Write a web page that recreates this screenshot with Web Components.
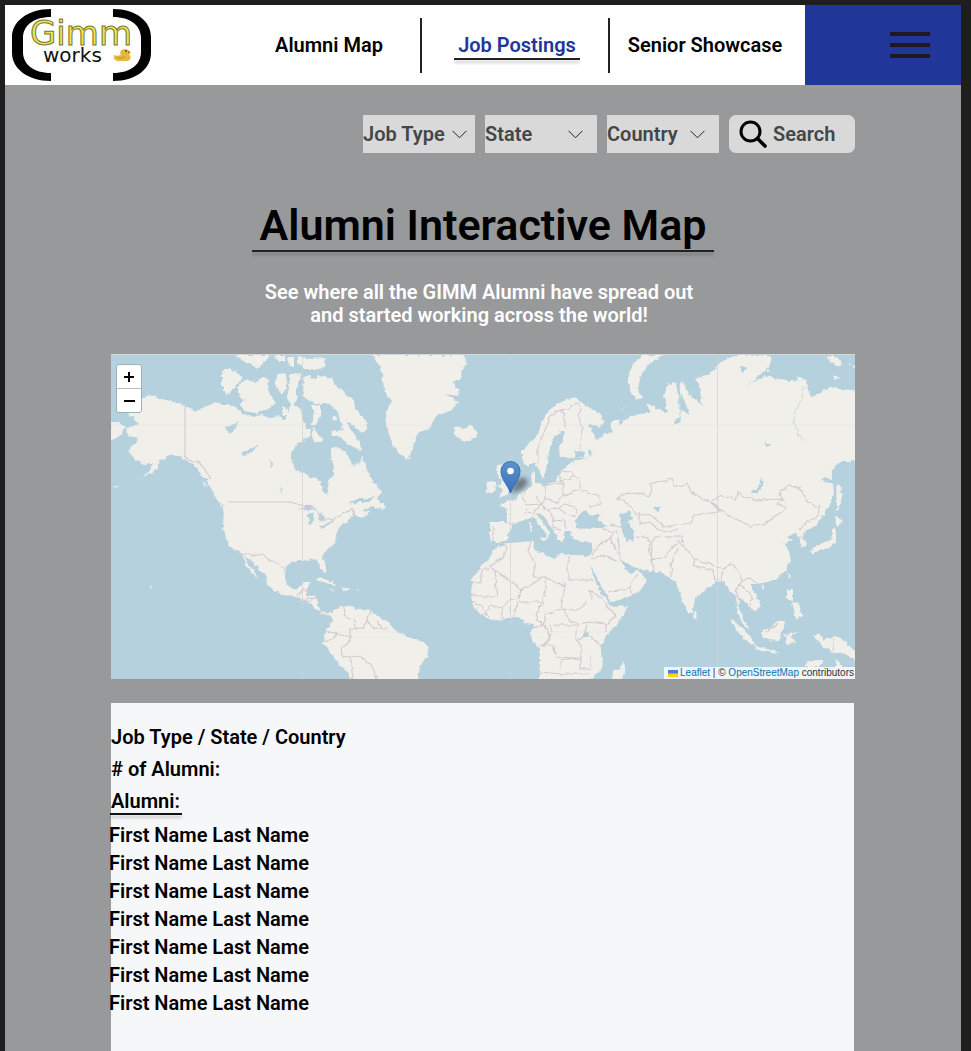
<!DOCTYPE html>
<html lang="en">
<head>
<meta charset="utf-8">
<title>GIMM Works – Alumni Interactive Map</title>
<style>
  html, body { margin: 0; }
  body { background: #1e1e1e; font-family: Roboto, "Liberation Sans", sans-serif; font-weight: 600; font-size: 20px; color: #000; }
</style>
</head>
<body>
<alumni-page></alumni-page>
<script>
function define(name, html) {
  const template = document.createElement('template');
  template.innerHTML = html;
  customElements.define(name, class extends HTMLElement {
    constructor() {
      super();
      this.attachShadow({ mode: 'open' }).append(template.content.cloneNode(true));
    }
  });
}

define('gimm-logo', `
<style>
  :host { display: block; flex: none; width: 140px; height: 72px; }
  svg { display: block; }
  text { font-family: "DejaVu Sans", sans-serif; font-weight: 400; }
</style>
<svg width="140" height="72" viewBox="12 9 140 72" role="img" aria-label="Gimm works">
  <path d="M51 9C27 9 12 22 12 37V53C12 68 27 81 51 81V73C33 73 23 64 23 52V38C23 26 33 17 51 17Z"/>
  <path d="M113 9C137 9 151 22 151 37V53C151 68 137 81 113 81V73C131 73 141 64 141 52V38C141 26 131 17 113 17Z"/>
  <text x="30" y="45" font-size="34" fill="#ece84a" stroke="#77763a" stroke-width="1">Gimm</text>
  <text x="43" y="62" font-size="20" fill="#111">works</text>
  <path d="M114 55c2 1 4 1 7 0c-2-3 0-6 4-6c4 0 6 3 4 6c3 1 2 6-3 6h-8c-3 0-5-3-4-6z" fill="#e3b93c"/>
  <path d="M128 51l3 1l-3 2z" fill="#df6b32"/><circle cx="126" cy="51" r="1" fill="#654b18"/>
  <path d="M117 57q4 3 8-1" fill="none" stroke="#c99522"/>
</svg>`);

define('nav-item', `
<style>
  :host { display: flex; align-items: center; justify-content: center; flex: 1 1 0; height: 55px; box-sizing: border-box; padding-left: 4px; border-right: 2px solid #222; }
  :host(:last-of-type) { border-right-color: transparent; }
  a { position: relative; color: inherit; text-decoration: none; white-space: nowrap; line-height: 26px; padding: 0 4px; }
  :host([active]) a { color: #203698; }
  :host([active]) a::after { content: ""; position: absolute; left: 0; right: 0; top: 100%; height: 2px; background: #222; box-shadow: 0 3px 3px rgba(0,0,0,.2); }
</style>
<a href="#"><slot></slot></a>`);

define('menu-button', `
<style>
  :host { display: flex; flex: 0 0 156px; background: #203698; justify-content: flex-end; align-items: center; box-sizing: border-box; padding-right: 31px; }
  button { border: 0; background: none; padding: 0; display: block; }
  svg { display: block; }
</style>
<button type="button" aria-label="Menu"><svg width="40" height="28" viewBox="0 0 40 28"><path d="M0 3h40M0 14h40M0 25h40" stroke="#1d1b20" stroke-width="4"/></svg></button>`);

define('site-header', `
<style>
  :host { display: block; }
  header { display: flex; height: 80px; background: #fff; }
  gimm-logo { margin: 4px 0 0 7px; }
  nav { display: flex; align-items: center; flex: 0 1 564px; margin-left: auto; padding-right: 7px; }
</style>
<header>
  <gimm-logo></gimm-logo>
  <nav aria-label="Main">
    <nav-item>Alumni Map</nav-item>
    <nav-item active>Job Postings</nav-item>
    <nav-item>Senior Showcase</nav-item>
  </nav>
  <menu-button></menu-button>
</header>`);

const selectTemplate = document.createElement('template');
selectTemplate.innerHTML = `
<style>
  :host { display: block; flex: 0 1 112px; }
  .box { display: grid; align-items: center; height: 38px; background: #d9d9d9; }
  select, svg { grid-area: 1 / 1; }
  select { appearance: none; border: 0; border-radius: 0; background: none; margin: 0; padding: 0; width: 100%; height: 38px; font: inherit; color: #444748; }
  svg { justify-self: end; margin-right: 8px; pointer-events: none; }
  :host([roomy]) svg { margin-right: 14px; }
</style>
<div class="box">
  <select><option></option></select>
  <svg width="15" height="9" viewBox="0 0 15 9"><path d="M.5 .8L7.5 7.8L14.5 .8" fill="none" stroke="#222"/></svg>
</div>`;
customElements.define('filter-select', class extends HTMLElement {
  constructor() {
    super();
    this.attachShadow({ mode: 'open' }).append(selectTemplate.content.cloneNode(true));
  }
  connectedCallback() {
    const name = this.getAttribute('label');
    this.shadowRoot.querySelector('select').setAttribute('aria-label', name);
    this.shadowRoot.querySelector('option').textContent = name;
  }
});

define('search-box', `
<style>
  :host { display: block; flex: 0 1 126px; min-width: 0; }
  label { display: flex; align-items: center; gap: 6px; height: 38px; box-sizing: border-box; padding: 0 8px 0 10px; background: #d9d9d9; border-radius: 7px; }
  svg { flex: none; }
  input { flex: 1; width: 100%; min-width: 0; border: 0; padding: 0; background: none; font: inherit; color: #444748; }
  input::placeholder { color: #444748; opacity: 1; }
</style>
<label><svg width="28" height="28" viewBox="0 0 28 28" fill="none" stroke="#000" stroke-width="3" stroke-linecap="round"><circle cx="11.5" cy="11.5" r="9.5"/><path d="M18.5 18.5L26 26" stroke-width="3.6"/></svg>
<input type="text" placeholder="Search" aria-label="Search"></label>`);

define('filter-bar', `
<style>
  :host { display: block; }
  form { display: flex; justify-content: flex-end; gap: 10px; margin: 0; }
</style>
<form>
  <filter-select label="Job Type"></filter-select>
  <filter-select label="State" roomy></filter-select>
  <filter-select label="Country" roomy></filter-select>
  <search-box></search-box>
</form>`);

define('page-intro', `
<style>
  :host { display: flex; flex-direction: column; align-items: center; text-align: center; }
  h1 { margin: 0; padding: 0 8px; font-size: 43px; line-height: 50px; font-weight: 600; }
  h1::after { content: ""; display: block; height: 2px; margin: 0 -8px; background: #222; box-shadow: 0 3px 3px rgba(0,0,0,.2); }
  p { margin: 29px 8px 0 0; max-width: 440px; line-height: 23px; color: #fff; }
</style>
<h1><slot name="title"></slot></h1>
<p><slot></slot></p>`);

define('world-map', `
<style>
  :host { display: block; position: relative; border-top: 1px solid #d5d9da; }
  .world { display: block; width: 100%; aspect-ratio: 744 / 324; background: #b5d1dd; }
  .land { fill: #f0efea; }
  .water { fill: #b5d1dd; }
  .borders { fill: none; stroke: #d6c8cf; stroke-width: 1.1; stroke-linejoin: round; }
  .rivers { fill: none; stroke: #c9dbe1; stroke-width: 1; }
  .zoom { position: absolute; left: 5px; top: 9px; display: grid; border: 1px solid #9db2bb; border-radius: 3px; overflow: hidden; background: #bbb; gap: 1px; }
  button { border: 0; padding: 0; width: 24px; height: 23px; background: #fff; display: grid; place-items: center; }
  .credit { position: absolute; right: 0; bottom: 0; display: flex; align-items: center; gap: 2px; padding: 0 1px 0 4px; background: rgba(255,255,255,.8); color: #333; font: 10px/12px "Liberation Sans", sans-serif; white-space: nowrap; }
  .credit a { color: #0078a8; text-decoration: none; }
</style>
<svg class="world" viewBox="111 355 744 324" preserveAspectRatio="xMidYMid slice" role="img" aria-label="World map">
  <defs>
    <filter id="coast" x="0" y="0" width="100%" height="100%"><feTurbulence type="fractalNoise" baseFrequency=".22" numOctaves="2" seed="4"/><feDisplacementMap in="SourceGraphic" scale="5" xChannelSelector="R" yChannelSelector="G"/><feGaussianBlur stdDeviation=".6"/></filter>
    <filter id="line"><feTurbulence type="fractalNoise" baseFrequency=".15" numOctaves="2" seed="9"/><feDisplacementMap in="SourceGraphic" scale="5" xChannelSelector="R" yChannelSelector="G"/><feGaussianBlur stdDeviation=".4"/></filter>
    <filter id="soft" x="-50%" y="-50%" width="200%" height="200%"><feGaussianBlur stdDeviation="2"/></filter>
    <linearGradient id="pin" x2="0" y2="1"><stop stop-color="#5b93cc"/><stop offset="1" stop-color="#3a70bf"/></linearGradient>
  </defs>
  <g filter="url(#coast)">
    <path d="M100 340H870V690H100Z" fill="#b5d1dd"/>
    <g class="land">
      <path d="M134 405L142 398L150 395L158 398L170 401L184 405L190 408L196 411L203 408L210 405L216 401L222 405L230 405L238 409L244 415L253 417L262 414L270 418L280 416L285 420L288 413L290 406L296 405L301 410L302 418L306 428L305 438L300 442L293 450L291 460L296 471L303 472L312 478L320 480L322 490L327 494L329 488L328 481L333 475L334 466L331 458L331 448L338 447L346 453L351 463L356 466L360 462L361 456L365 465L369 475L373 482L380 488L382 493L374 497L364 499L356 499L349 505L358 502L368 502L376 496L380 502L387 507L380 509L372 507L362 511L370 512L362 518L354 514L347 521L338 528L336 535L335 544L325 552L322 558L325 567L325 573L321 568L318 560L310 559L303 561L293 561L286 566L285 577L287 585L294 590L301 586L304 582L310 582L307 590L306 596L317 596L317 604L320 612L326 613L331 612L331 616L322 614L315 608L309 602L300 599L293 596L283 595L268 586L267 578L258 567L250 560L245 554L247 563L254 571L257 578L251 573L246 565L240 552L231 547L226 538L223 528L224 505L217 500L212 490L206 480L199 472L193 464L183 458L172 455L165 458L158 463L154 471L145 476L135 482L122 488L141 479L150 470L153 463L143 464L134 459L128 452L132 445L139 439L128 435L125 428L138 425L134 418L128 413Z"/>
      <path d="M222 371L230 369L240 374L243 379L235 386L228 395L222 390ZM238 385L246 380L255 382L264 377L269 380L268 390L272 397L276 403L266 410L255 413L244 411L240 404L245 400L238 393ZM234 355L249 363L257 369L266 360L272 355ZM278 375L286 374L287 382L285 391L281 394L274 384ZM290 374L302 373L299 381L296 390L296 401L292 407L288 398L289 386ZM298 357L310 359L324 358L326 366L319 369L304 369L298 364ZM288 357H294V367H289ZM275 355H284V362H278ZM311 405L321 405L321 415L316 425L312 424L314 415ZM282 407L288 409L288 415L282 415ZM333 415L336 415L337 420L332 421ZM313 428L324 441L316 442L311 437ZM306 429H311L309 437L304 441Z"/>
      <path d="M304 378L310 375L313 379L318 376L333 378L335 384L344 392L354 401L355 408L368 424L364 434L354 426L345 420L360 443L361 451L348 444L338 436L331 435L332 431L343 430L340 420L336 410L329 403L318 404L307 400L303 396Z"/>
      <path d="M371 355L379 364L382 375L384 390L392 401L387 410L386 425L391 440L398 453L408 460L412 450L417 433L430 428L436 416L450 411L459 402L445 394L458 396L460 391L452 382L462 378L460 372L467 364L463 355Z"/>
      <path d="M454 428L459 426L463 429L472 425L478 433L474 439L466 442L460 440L455 434ZM498 466L503 465L504 475L507 484L512 488L509 494L499 498L502 492L499 487L501 480L497 474ZM489 481L496 482L495 491L486 494L487 484ZM119 422L126 427L118 437L111 440V422Z"/>
      <path d="M522 452L528 445L537 436L542 422L547 413L555 405L565 400L575 397L581 402L590 408L600 413L605 422L600 427L588 422L592 433L598 440L606 433L612 432L612 420L618 420L620 425L632 415L650 413L646 403L655 407L667 413L664 395L668 384L676 383L678 395L679 408L680 416L672 425L680 422L681 410L690 415L684 400L679 390L682 381L690 395L702 405L700 390L696 378L710 374L720 362L735 355L771 355L770 366L758 376L748 386L757 380L765 376L780 379L796 382L797 376L805 380L808 390L812 398L820 392L833 387L842 389L860 391V461L842 461L832 470L822 480L833 484L834 493L829 505L822 518L812 528L805 531L803 537L807 546L802 547L799 537L795 533L787 537L793 540L784 543L788 549L791 560L786 570L778 578L767 582L758 584L751 584L751 589L757 597L762 605L755 611L750 607L745 602L740 597L738 605L742 617L749 630L743 625L737 610L736 595L730 592L724 582L718 580L708 588L695 598L693 611L689 614L683 602L678 590L676 582L668 577L660 572L641 570L630 565L620 560L630 574L637 569L647 580L640 591L625 598L611 603L605 592L597 578L589 563L595 580L601 593L611 607L628 606L620 620L608 634L601 645L603 660L602 670L588 681H538L540 665L540 650L532 640L531 632L533 624L525 623L517 617L505 619L491 621L480 613L472 603L471 595L472 580L480 568L488 560L496 547L510 543L533 541L534 549L545 555L555 559L560 552L570 555L590 556L592 550L593 543L585 542L572 538L571 531L565 531L563 541L558 540L553 530L545 518L538 512L540 519L550 532L548 538L545 532L533 517L525 520L518 522L512 526L509 533L506 541L497 543L490 540L490 522L507 522L507 510L500 504L508 501L515 500L520 494L528 489L532 486L531 475L535 470L535 483L545 486L555 482L561 470L573 462L588 457L560 458L559 447L566 432L560 430L553 440L549 452L548 465L543 478L538 470L535 462L528 467L522 458Z"/>
      <path d="M331 613L340 607L348 606L360 610L368 609L375 615L388 622L395 630L408 637L420 640L429 647L427 657L420 665L418 681H350L348 672L335 660L327 648L323 643L325 632L332 623Z"/>
      <path d="M315 580L323 578L332 582L338 585L330 584ZM341 587L351 589L345 591ZM331 589L335 590L331 591ZM356 590H359V591H356ZM530 523L532 523L532 533L530 533ZM539 537L548 537L546 541ZM624 661L626 668L620 685L612 679L613 671L620 668ZM694 609L698 617L694 619ZM730 620L737 623L751 637L755 646L745 640L738 632ZM754 646L768 649L780 653L768 652L757 650ZM761 631L768 630L777 621L784 621L782 631L778 641L768 640L762 636ZM785 635L798 632L790 637L796 643L787 644ZM787 589L792 590L792 601L787 598ZM791 602L799 603L802 616L796 619ZM812 634L820 635L824 640L835 636L845 641L856 653V660L846 654L832 652L822 646ZM808 662L816 660L824 660L820 668L805 667ZM837 658L842 669L835 671ZM788 573L791 576L788 580ZM760 585L766 586L763 590ZM809 551L821 543L831 540L833 528L836 529L836 542L829 548L818 551L812 555ZM835 515L844 521L836 526ZM836 484L840 485L842 501L837 511ZM820 477L832 470L832 479Z"/>
      <path d="M643 355L633 364L628 378L629 389L636 400L642 398L638 388L641 374L650 363L663 355ZM622 407L625 408L623 411ZM827 357L833 354L843 364L836 366ZM833 375L841 378L835 380ZM846 362L856 366V369ZM767 369L771 371L767 372ZM150 585L153 587L150 588Z"/>
      <path d="M113 487l8-2-7 4zM151 466l9-4-3 8zM202 480l6 8-3-1zM213 495l11 12-3-1z"/>
    </g>
    <g class="water">
      <path d="M575 524L580 513L585 511L592 516L602 514L596 519L608 527L590 529L576 528Z"/>
      <path d="M619 515L630 510L633 519L628 522L633 532L634 540L625 541L622 530Z"/>
      <path d="M574 453L584 451L584 456L575 458ZM579 451L583 450L585 455L581 457ZM588 449L592 453L589 457ZM653 507H661L657 512ZM583 634L589 633L588 637L583 637Z"/>
      <path d="M750 493L758 487L763 477L763 485L757 493ZM225 427L238 422L235 430L230 434ZM241 454L258 444L254 451L243 456ZM298 509L310 504L316 509L308 510ZM309 514L314 512L312 526L308 525ZM318 512L323 514L326 520L320 522ZM319 526L328 523L334 519L330 524L321 529Z"/>
      <path d="M740 366l9 2-7 4zM279 485l4 9-2-2zM270 459l4 6-3 2zM764 441l6 4-4 2z"/>
    </g>
    <path class="rivers" d="M803 386L802 399L795 410L794 422L798 434L806 441M687 378L685 385L691 391M680 395V422M579 645L578 637M590 654L591 668M568 504L573 500"/>
  </g>
  <path class="borders" d="M185 406V457M228 502H291"/>
  <g class="borders" filter="url(#line)">
    <path d="M185 457L193 463L198 460L211 479M291 502L304 506L315 508L321 520L335 519L349 510L352 508L354 515M241 553L259 556L264 555L271 562L278 562L285 571M296 598L302 590H307V599L317 598M303 598L308 602L317 596M329 613L322 616"/>
    <path d="M343 607L344 615L354 619L355 629L363 628L367 620L370 610M367 620L373 628L388 628M378 620L381 628M354 629H350V642L341 648L342 656L350 657L353 679M350 657L361 656L373 668L377 679M327 631L337 634L350 637M325 642L332 639L337 634"/>
    <path d="M538 464L538 448L544 432L551 416L558 410L564 414L565 428M558 410L568 409L575 403L580 405L579 417L582 430L580 449M560 471L570 472L578 478L581 489L562 496L564 483L543 485M562 496L556 503L545 498L541 504L525 505L521 494M581 489L600 498L602 504L588 507M545 498V485M541 504L533 514L525 513L527 508M541 504L548 510L560 507L566 514L576 517M548 510L553 520L565 521V530M560 507L565 504L574 507L578 514M553 520V528L562 530M507 523L517 525M493 526V540M560 471V482L574 477M524 495L527 482M534 514L544 517L549 525M541 504L536 498"/>
    <path d="M506 544L505 555L490 566L482 570M490 567L514 584L521 590L544 577M490 570H481V582H472M494 569L497 597H480L472 594M521 590L519 598L509 600L502 608L490 605M530 541L529 552L534 562V577L544 577L565 586V582M568 556V580H594M565 586L561 609L545 615L542 601L546 590V578M517 602L514 618M519 602H541M509 608L511 618M502 608V620M490 605L484 615M472 602L482 606L489 618M541 602L535 620L544 625L546 617M561 609L575 610L583 607L588 600M563 609L570 620L578 624L588 622M544 625L534 628M545 625L550 640L540 645H553L556 656L570 658L581 660L580 668L592 670M553 625H577V640L581 645V658L570 658M541 645L549 642M538 672L563 674H590M592 600L590 590L602 598L607 607L616 615L606 624V632M588 622L606 624M590 636L602 648M560 670L562 660L573 658M587 624L584 636L579 640M549 625L552 634L546 642"/>
    <path d="M592 555L599 545L610 538L618 554M592 558L605 555L618 562M608 592L629 588L637 574M629 588L634 597M610 525L624 528M616 530L619 544L620 560M600 528L614 532L611 538M633 536L648 539L652 545L651 560L655 570M651 560L665 557L678 540L684 546L695 560L712 565L722 569M651 560L649 546L656 536L672 537L682 537L683 542M639 512V524L650 522L657 528L668 532L678 530M639 513L651 515L664 527L675 525L690 523L695 515"/>
    <path d="M637 515L625 500L617 500L621 494L639 493L651 496L650 485L672 479L674 486L680 486L687 483L694 495L711 502L718 506L719 512L695 515M711 501L723 496L735 499L738 492L745 497L756 500L779 499L785 502L779 494L782 490L788 486L799 487L806 500L815 506L820 505M711 503L730 517L752 526L766 523L779 514L786 508L778 504L782 499M820 506L817 518L806 521L799 530M798 537L804 537M695 560L693 565L713 571L715 580L722 579L724 569L732 562L738 570L742 580L750 578L756 584M738 584L745 588L753 598L748 606M742 580L736 590L740 600M672 577L671 565L678 548M767 632L777 623M834 639V654"/>
  </g>
  <g stroke="#d0d4d8" stroke-width="1" opacity=".7"><path d="M302.500 355V679M510.500 355V679M717.500 355V679"/><path d="M111 425H855M111 632H855" opacity=".25"/></g>
  <path d="M511 493L515 482C520 475 530 477 527 484C524 490 516 492 511 493Z" opacity=".4" filter="url(#soft)"/>
  <path d="M510.500 493C508 485 501 480 501 471A9.500 9.500 0 0 1 520 471C520 480 513 485 510.500 493Z" fill="url(#pin)" stroke="#386ea7" stroke-width="1"/>
  <circle cx="510.500" cy="471" r="3.300" fill="#fff"/>
</svg>
<div class="zoom">
  <button type="button" aria-label="Zoom in"><svg width="12" height="12" viewBox="0 0 12 12"><path d="M6 1V11M1 6H11" stroke="#000" stroke-width="2"/></svg></button>
  <button type="button" aria-label="Zoom out"><svg width="12" height="12" viewBox="0 0 12 12"><path d="M1 6H12" stroke="#000" stroke-width="2"/></svg></button>
</div>
<div class="credit">
  <svg width="10" height="7" viewBox="0 0 10 7"><path d="M0 0h10v4H0z" fill="#4c7be1"/><path d="M0 3.500h10V7H0z" fill="#ffd500"/></svg>
  <span><a href="#">Leaflet</a> | © <a href="#">OpenStreetMap</a> contributors</span>
</div>`);

define('alumni-results', `
<style>
  :host { display: block; background: #f6f7f9; box-sizing: border-box; padding: 18px 0 34px; }
  p, h2 { margin: 0; font: inherit; line-height: 32px; }
  h2 { width: fit-content; line-height: 24px; margin: 4px 0 6px; padding-right: 2px; }
  h2::after { content: ""; display: block; height: 2px; margin: 0 -2px 0 -1px; background: #111; box-shadow: 0 3px 3px rgba(0,0,0,.2); }
  ul { margin: 0 0 0 -2px; padding: 0; list-style: none; line-height: 28px; }
</style>
<p>Job Type / State / Country</p>
<p># of Alumni:</p>
<h2>Alumni:</h2>
<ul>
  <li>First Name Last Name</li>
  <li>First Name Last Name</li>
  <li>First Name Last Name</li>
  <li>First Name Last Name</li>
  <li>First Name Last Name</li>
  <li>First Name Last Name</li>
  <li>First Name Last Name</li>
</ul>`);

define('alumni-page', `
<style>
  :host { display: flex; flex-direction: column; box-sizing: border-box; min-height: 100vh; padding: 5px 10px 0 5px; }
  main { flex: 1; display: flex; flex-direction: column; background: #98999b; padding: 30px 20px 0; }
  .column { flex: 1; display: flex; flex-direction: column; width: 100%; max-width: 744px; margin: 0 auto; }
  page-intro { margin: 47px 0 27px; }
  alumni-results { flex: 1; margin: 24px 1px 0 0; }
</style>
<site-header></site-header>
<main>
  <div class="column">
    <filter-bar></filter-bar>
    <page-intro><span slot="title">Alumni Interactive Map</span>See where all the GIMM Alumni have spread out and started working across the world!</page-intro>
    <world-map></world-map>
    <alumni-results></alumni-results>
  </div>
</main>`);
</script>
</body>
</html>
